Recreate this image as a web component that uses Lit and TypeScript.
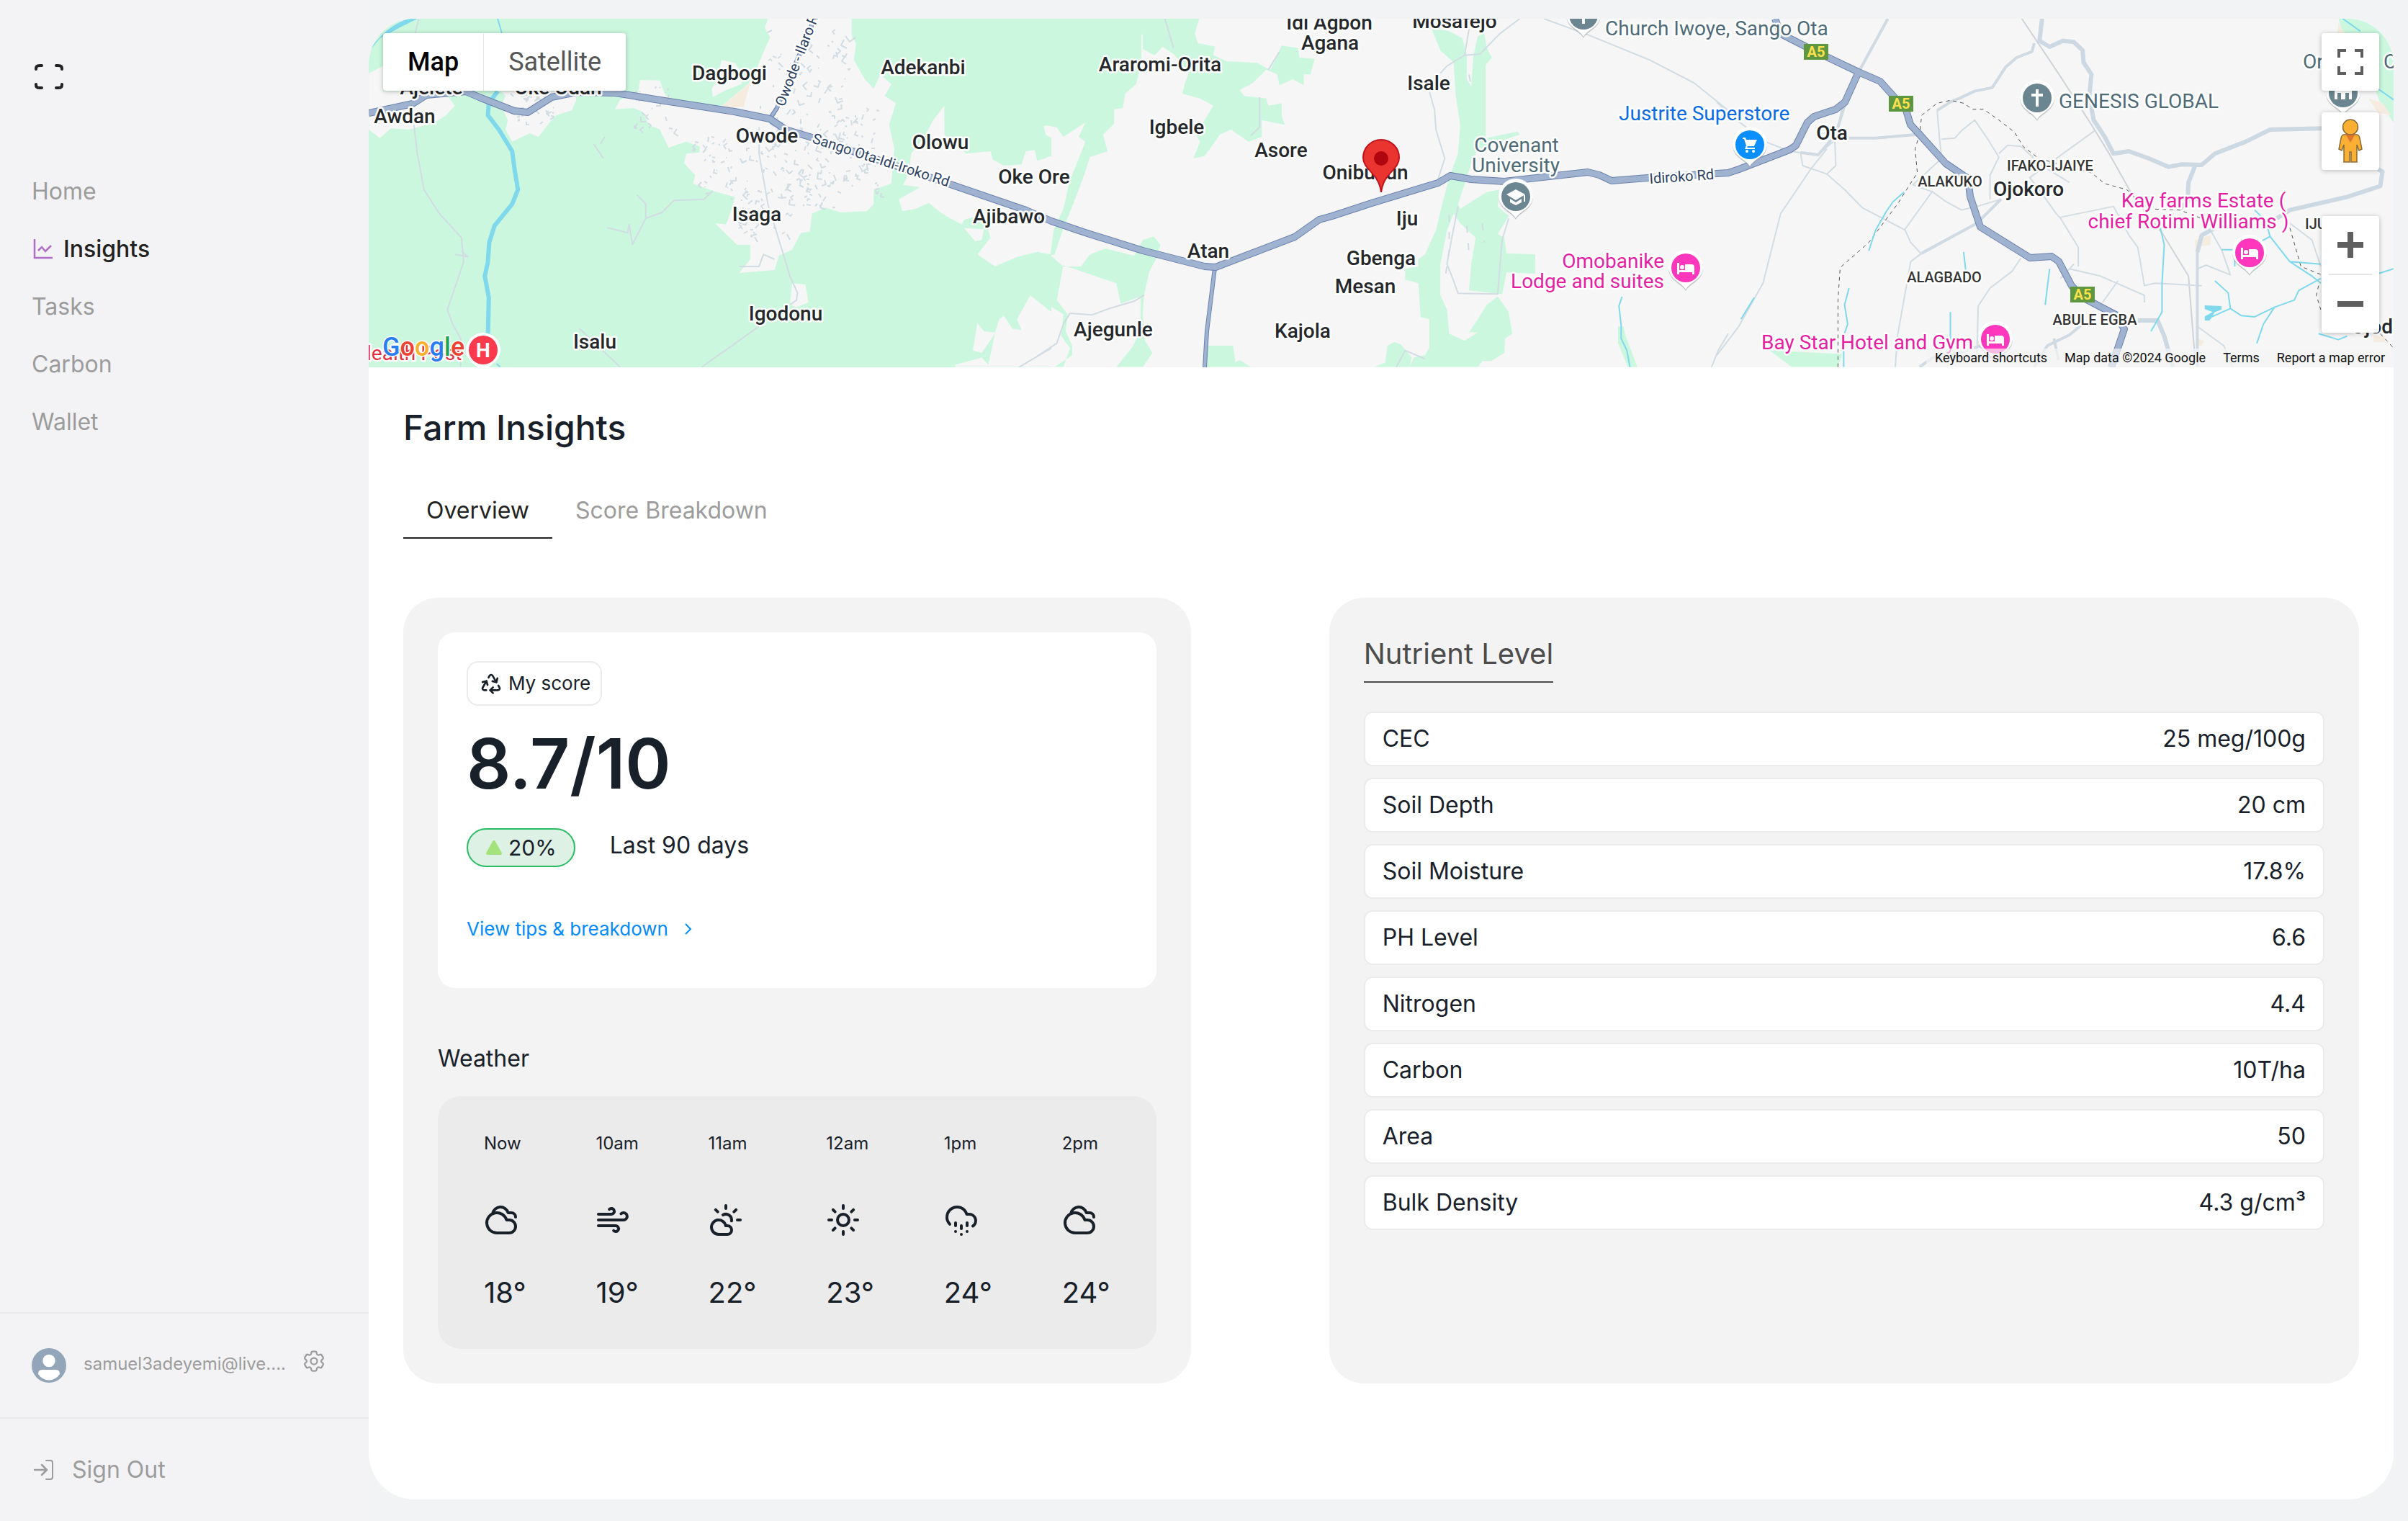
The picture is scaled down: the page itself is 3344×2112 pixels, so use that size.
import { LitElement, html, css, svg } from "lit";
import { customElement, property, state } from "lit/decorators.js";
import { classMap } from "lit/directives/class-map.js";

/* ---------- icons ---------- */

const cloudy = svg`
  <path d="M17.5 21H9a7 7 0 1 1 6.71-9h1.79a4.5 4.5 0 1 1 0 9Z" />
  <path d="M22 10a3 3 0 0 0-3-3h-2.207a5.502 5.502 0 0 0-10.702.5" />`;
const wind = svg`
  <path d="M17.7 7.7a2.5 2.5 0 1 1 1.8 4.3H2" />
  <path d="M9.6 4.6A2 2 0 1 1 11 8H2" />
  <path d="M12.6 19.4A2 2 0 1 0 14 16H2" />`;
const cloudSun = svg`
  <path d="M12 2v2M4.93 4.93l1.41 1.41M20 12h2M19.07 4.93l-1.41 1.41" />
  <path d="M15.947 12.65a4 4 0 0 0-5.925-4.128" />
  <path d="M13 22H7a5 5 0 1 1 4.9-6H13a3 3 0 0 1 0 6Z" />`;
const sun = svg`
  <circle cx="12" cy="12" r="4" />
  <path d="M12 2v2M12 20v2M4.93 4.93l1.41 1.41M17.66 17.66l1.41 1.41M2 12h2M20 12h2M6.34 17.66l-1.41 1.41M19.07 4.93l-1.41 1.41" />`;
const hail = svg`
  <path d="M4 14.899A7 7 0 1 1 15.71 8h1.79a4.5 4.5 0 0 1 2.5 8.242" />
  <path d="M16 14v2M8 14v2M16 20h.01M8 20h.01M12 16v2M12 22h.01" />`;
const recycle = svg`
  <path d="M7 19H4.815a1.83 1.83 0 0 1-1.57-.881 1.785 1.785 0 0 1-.004-1.784L7.196 9.5" />
  <path d="M11 19h8.203a1.83 1.83 0 0 0 1.556-.89 1.784 1.784 0 0 0 0-1.775l-1.226-2.12" />
  <path d="m14 16-3 3 3 3" />
  <path d="M8.293 13.596 7.196 9.5 3.1 10.598" />
  <path d="m9.344 5.811 1.093-1.892A1.83 1.83 0 0 1 11.985 3a1.784 1.784 0 0 1 1.546.888l3.943 6.843" />
  <path d="m13.378 9.633 4.096 1.098 1.097-4.096" />`;

/* ---------- farm map ---------- */

type Anchor = "start" | "middle" | "end";
type Place = [text: string, x: number, y: number];

const towns: Place[] = [
  ["Awdan", 562, 171], ["Ajelete", 599, 131], ["Oke Odan", 775, 131], ["Dagbogi", 1013, 111],
  ["Adekanbi", 1282, 103], ["Owode", 1065, 198], ["Olowu", 1306, 207], ["Isaga", 1051, 307],
  ["Igodonu", 1091, 445], ["Isalu", 826, 484], ["Oke Ore", 1436, 255], ["Ajibawo", 1401, 310],
  ["Araromi-Orita", 1611, 99], ["Idi Agbon", 1846, 41], ["Agana", 1847, 69], ["Mosafejo", 2020, 39],
  ["Isale", 1984, 125], ["Igbele", 1634, 186], ["Asore", 1779, 218], ["Onibukun", 1896, 249],
  ["Iju", 1954, 313], ["Atan", 1678, 358], ["Gbenga", 1918, 368], ["Mesan", 1896, 407],
  ["Ajegunle", 1546, 467], ["Kajola", 1809, 469], ["Ota", 2544, 194], ["Ojokoro", 2817, 272],
  ["Ojod", 3294, 463],
];
const districts: Place[] = [
  ["IFAKO-IJAIYE", 2847, 237], ["ALAKUKO", 2708, 259], ["ALAGBADO", 2700, 392],
  ["ABULE EGBA", 2909, 451], ["IJU", 3216, 318],
];
const pois: [string, number, number, string, Anchor][] = [
  ["Covenant", 2106, 211, "slate", "middle"],
  ["University", 2105, 239, "slate", "middle"],
  ["Church Iwoye, Sango Ota", 2229, 49, "slate", "start"],
  ["GENESIS GLOBAL", 2859, 150, "slate", "start"],
  ["Or", 3198, 95, "slate", "start"],
  ["C", 3310, 95, "slate", "start"],
  ["Justrite Superstore", 2248, 167, "blue", "start"],
  ["Omobanike", 2311, 372, "pink", "end"],
  ["Lodge and suites", 2311, 400, "pink", "end"],
  ["Kay farms Estate (", 3060, 288, "pink", "middle"],
  ["chief Rotimi Williams )", 3039, 317, "pink", "middle"],
  ["Bay Star Hotel and Gym", 2446, 485, "pink", "start"],
  ["lealth Post", 509, 500, "red", "start"],
];
const shields: [number, number][] = [[2522, 72], [2640, 144], [2892, 409]];

const glyphs: Record<string, unknown> = {
  cap: svg`<path d="M-13 -3L0 -10L13 -3L0 5ZM-8 3L0 8L8 3V8L0 12L-8 8ZM11 -2H13V7H11Z" />`,
  cross: svg`<path d="M-2 -12H2V-6H8V-2H2V12H-2V-2H-8V-6H-2Z" />`,
  bed: svg`<path d="M-12 -7H-9V3H-1V-5H8Q12 -5 12 -1V9H9V6H-9V9H-12Z" /><circle cx="-5" cy="-1" r="3" />`,
  cart: svg`<path d="M-10 -10H-6L-5 -7H10L6 2H-3L-4 4H7V6H-7L-5 1L-8 -8H-10Z" /><circle cx="-4" cy="9" r="2" /><circle cx="5" cy="9" r="2" />`,
  hall: svg`<path d="M-12 -6H12V9H8V0H3V9H-3V0H-8V9H-12Z" />`,
};
const pins: [number, number, string, string][] = [
  [2105, 273, "#6b8591", "cap"], [2199, 21, "#6b8591", "cross"], [2829, 136, "#6b8591", "cross"],
  [3254, 129, "#6b8591", "hall"], [2430, 201, "#0b8fff", "cart"], [2341, 372, "#ff37bd", "bed"],
  [3124, 351, "#ff37bd", "bed"], [2771, 471, "#ff37bd", "bed"],
];

/* Short street fragments scattered through the built-up area around Owode. */
function streets(): string {
  let seed = 11;
  const next = () => (seed = (seed * 16807) % 2147483647) / 2147483647;
  const blocks = [
    [1072, 40, 110, 100, 50], [1055, 150, 170, 120, 130], [960, 190, 90, 80, 40],
    [1015, 290, 90, 40, 26], [880, 120, 60, 60, 20], [1010, 250, 160, 40, 40], [710, 130, 60, 40, 30],
  ];
  let d = "";
  for (const [x, y, w, h, n] of blocks) {
    for (let i = 0; i < n; i++) {
      const sx = Math.round(x + next() * w);
      const sy = Math.round(y + next() * h);
      const dx = Math.round(next() * 12 - 6);
      const dy = Math.round(next() * 12 - 4);
      d += `M${sx} ${sy}l${dx} ${dy}`;
      if (next() > 0.6) d += `l${dy} ${-dx}`;
    }
  }
  return d;
}
const streetPath = streets();

@customElement("farm-map")
export class FarmMap extends LitElement {
  @state() private view = "Map";

  static styles = css`
    :host { display: block; position: relative; overflow: hidden; font-family: Roboto, "Noto Sans", sans-serif; }
    .canvas { display: block; width: 100%; height: 484px; background: #f6f6f6; }
    .green { fill: #cbf7de; }
    .land { fill: #f6f6f6; }
    .sand { fill: #f5ecdf; }
    .line { fill: none; vector-effect: non-scaling-stroke; stroke-linejoin: round; }
    .river { stroke: #7fd8ec; stroke-width: 6; }
    .stream { stroke: #7fd8ec; stroke-width: 2; }
    .lake { fill: #7fd8ec; }
    .lane { stroke: #d2dce3; stroke-width: 2; }
    .road { stroke: #cfdae3; stroke-width: 4; }
    .avenue { stroke: #cdd9e2; stroke-width: 6; }
    .border { stroke: #555; stroke-width: 1; stroke-dasharray: 5 5; }
    .rail { stroke: #cfd3d8; stroke-width: 2; }
    .case { stroke: #6b82ae; stroke-width: 10; }
    .highway { stroke: #9fb3d1; stroke-width: 8; }
    .case.slim { stroke-width: 6; }
    .highway.slim { stroke-width: 4; }
    text { paint-order: stroke; stroke: #fff; stroke-width: 5; stroke-linejoin: round; font-size: 28px; }
    .town { fill: #25282b; font-weight: 500; }
    .district { fill: #333; font-size: 20px; font-weight: 500; }
    .street { fill: #2d3f5f; font-size: 20px; }
    .slate { fill: #4f6b77; }
    .blue { fill: #0a6be0; }
    .pink { fill: #e31fa3; }
    .red { fill: #e0313f; }
    .shield { fill: #ffe14d; font-size: 20px; font-weight: 700; stroke: none; }
    .aitch { fill: #fff; font-size: 28px; font-weight: 700; stroke: none; }
    .google { font-size: 36px; font-weight: 500; stroke-width: 3; }

    .types { position: absolute; left: 20px; top: 20px; display: flex; background: #fff; border-radius: 4px; box-shadow: 0 1px 6px rgba(0, 0, 0, 0.25); }
    .types button { border: 0; background: none; font: 400 36px/80px Roboto, sans-serif; color: #565656; padding: 0 34px; }
    .types button.on { color: #000; font-weight: 500; }
    .types button + button { border-left: 1px solid #e3e3e3; }
    .tools { position: absolute; right: 20px; top: 20px; display: flex; flex-direction: column; gap: 30px; }
    .tools .zoom { margin-top: 34px; }
    .tool, .zoom { background: #fff; border: 0; border-radius: 4px; box-shadow: 0 1px 6px rgba(0, 0, 0, 0.25); width: 80px; }
    .tool { height: 80px; padding: 0; display: grid; place-items: center; }
    .zoom { display: flex; flex-direction: column; align-items: center; }
    .zoom .tool { box-shadow: none; background: none; }
    .zoom hr { width: 60px; height: 2px; border: 0; margin: 0; background: #e3e3e3; }
    .legal { position: absolute; right: 0; bottom: 0; display: flex; background: rgba(245, 245, 245, 0.7); font-size: 18px; line-height: 26px; color: #111; }
    .legal > * { padding: 0 12px; color: inherit; text-decoration: none; border: 0; background: none; font: inherit; }
  `;

  private pin([x, y, fill, glyph]: [number, number, string, string]) {
    return svg`<g transform=${`translate(${x} ${y})`}>
      <path d="M0 32C-5 22 -24 18 -24 0A24 24 0 0 1 24 0C24 18 5 22 0 32Z" fill="#8a9499" opacity=".5" />
      <path d="M0 30C-5 20 -24 16 -24 -1A24 24 0 0 1 24 -1C24 16 5 20 0 30Z" fill="#fff" />
      <circle r="20" fill=${fill} /><g fill="#fff">${glyphs[glyph]}</g></g>`;
  }

  private west() {
    return svg`<g transform="translate(500 0) scale(.6123 .3333)">
      <rect class="green" x="0" y="60" width="1568" height="1500" />
      <path class="land" d="M20 305L52 275V380H190L215 440L195 480L170 510L110 540L70 535L45 575L20 540Z" />
      <path class="land" d="M320 380H490V420L480 460L445 480L430 510L405 570L385 555L345 590L330 540L335 500L320 440L330 400Z" />
      <path class="land" d="M820 250L850 262L868 310L865 350L830 375L800 405L798 370L810 330Z" />
      <path class="land" d="M925 78L918 115L930 155L905 260L895 310L880 350L815 450L720 425L692 395L680 335L635 333L630 395L590 415L578 455L620 450L640 465L655 520L680 540L700 615L740 590L770 610V635L740 640L735 680L760 730L755 765L800 795L850 820L845 860L830 935L805 930L830 975L855 1020H885V1080L860 1137L940 1125L950 1065L980 1040L1000 970L1020 965L1025 890L1055 865L1090 885L1150 880L1165 850V790L1205 765L1212 620L1200 520L1215 430L1190 400L1205 350L1180 310L1165 370L1145 330L1120 250L1125 180L1115 150V78Z" />
      <path class="land" d="M1325 440L1300 500L1280 570L1250 640L1245 720L1232 770L1270 780L1222 830L1230 880L1260 870L1290 845L1320 890L1365 935L1370 915L1390 905L1420 930L1430 990L1400 1060L1440 1110L1490 1070L1535 1050L1568 1060V650L1535 665L1530 625L1510 630L1500 685L1460 690L1435 665L1430 630L1375 640L1325 560Z" />
      <path class="land" d="M1568 520L1550 525L1555 560L1568 575ZM1370 950L1415 955L1410 1000L1395 1005Z" />
      <path class="land" d="M980 1180L1010 1185L1017 1260L990 1280L975 1270Z" />
      <path class="land" d="M1520 1230L1568 1300V1529H1350V1520L1410 1490L1425 1520L1440 1390L1410 1470L1390 1460L1400 1345L1415 1380L1440 1385L1450 1330L1460 1315L1480 1370L1500 1375L1490 1330Z" />
      <path class="sand" d="M885 345L815 450L870 445Z" />
      <path class="line lane" d="M133 78L125 140M122 520L130 640L145 790L180 890L230 990L235 1090L215 1200L198 1290L210 1350L228 1410V1529M561 948L607 970L610 935L618 1018L648 910L685 885L712 835L780 830L800 795M648 910V850L628 812M905 530V640L925 850L950 1000L975 1150L992 1220L990 1250L975 1270M905 1360L775 1529M497 1368L550 1460L590 1529M640 1529M1568 1450L1495 1529M530 600L552 660M545 600L555 570M860 1110H905L915 1060L940 1080M215 1060L245 1070L230 1045" />
      <path class="lake" d="M20 215C45 140 80 95 110 78H130L90 115L45 160Z" />
      <path class="line stream" d="M312 78L322 140M310 1515L318 1529" />
      <path class="line river" d="M312 380L292 430L290 480L315 540L345 630L350 700L358 790L345 850L305 940L293 1010L290 1090L283 1150L292 1240L290 1400" />
    </g>
    <path class="line lane" d=${streetPath} />`;
  }

  private center() {
    return svg`<g transform="translate(1440 0) scale(.6123 .3333)">
      <rect class="land" x="33" y="60" width="1535" height="1500" />
      <path class="green" d="M0 78H262V110L237 145V260L225 350L200 390L195 450L175 455V515L150 560L160 630L120 655L105 740L80 860L60 950L40 1060L30 1065L38 960L60 870L75 750L95 660L110 590L95 570L110 510L60 570L45 530L15 520H0Z" />
      <path class="green" d="M0 575L20 605V660L0 670Z" />
      <path class="green" d="M262 78H368L358 140L365 180L420 200L480 240L510 265L530 290L555 190L592 200L595 240L630 245L620 310H605V355L580 330L550 355L545 310L520 290L490 345L460 375L470 400L520 410L525 440L555 430V480L562 520L540 512L510 500V570L480 590L440 540L415 560L400 600L380 650L355 660L370 590L360 560L400 440L370 410L330 390L335 350L345 300L310 225L285 195L267 230L240 205V140Z" />
      <path class="land" d="M405 175L500 190L545 200L528 290L500 262L430 255L400 230Z" />
      <path class="green" d="M0 1050L30 1062L60 1110H100L120 1060L155 1035L220 1065L240 1000L265 985L280 1020L270 1080L255 1130L243 1230L240 1310L245 1420L262 1470L240 1529H180L215 1450L235 1380V1235L190 1265L180 1180L60 1105L50 1200L45 1250L70 1310L65 1380L80 1440V1480L40 1529H60L75 1450L55 1400L60 1310L0 1240Z" />
      <path class="green" d="M385 1440H445L450 1510L460 1500L485 1529H385Z" />
      <path class="green" d="M895 120L925 125L935 130L965 160L975 230V330L985 360L990 230L1000 150L1015 140L1020 200L1032 240L1018 270V575L1090 548L1095 560L1000 620L985 680L975 740L955 850L960 870L1020 800L1050 790L1045 860L1070 900L1045 975L1060 990L1065 1055L1130 1060V1140L1065 1135L1055 1225L980 1210L985 1100L995 990L960 930L945 890L930 960L915 1100L915 1230L930 1290L935 1390L970 1420L1000 1385H980L1000 1330L1020 1270L1045 1235L1070 1300L1078 1390L1062 1410L1060 1470L1030 1505H1010L1000 1529H845L855 1490L880 1480L890 1450V1330L870 1320L865 1180L835 1165V1120L865 1110V1080L880 1060L905 960L915 880L935 740L955 640L960 520L950 400L945 260L915 210Z" />
      <path class="green" d="M765 1529L790 1510L795 1440L810 1425L825 1435L850 1490L845 1529Z" />
      <path class="green" d="M1318 1360H1330L1335 1400L1362 1529H1340L1318 1430Z" />
      <path class="line lane" d="M290 78L310 200M550 215L525 290M505 405V530L485 565M1095 78L1050 140L1005 225L970 230L930 275L915 305M980 120L970 230M890 380L902 460L905 540L925 660L910 745M1150 78L1250 145L1390 250L1490 345L1568 460M0 1485L45 1430L60 1350L75 1305L125 1312L165 1285L220 1255L243 1230M955 860L940 1000L930 1100L945 1170L955 1222L1045 1225L1055 1000L1070 910M1568 1390L1545 1460L1530 1529M815 1529L835 1460L880 1495" />
      <path class="line lane" stroke-dasharray="10 14" d="M935 895V1040L925 1170M975 940L980 1060M1010 930L1015 1010M980 310L985 360" />
      <path class="line stream" d="M1327 1236L1320 1275L1325 1355V1410L1338 1460L1345 1529" />
    </g>`;
  }

  private east() {
    return svg`<g transform="translate(2384 0) scale(.6123 .3333)">
      <path class="green" d="M120 1460L285 1475L275 1529H170ZM1410 78H1535V510L1505 430L1495 380L1475 200L1420 140Z" />
      <path class="sand" d="M1410 95L1425 140H1408ZM1478 410L1510 430L1530 480L1500 470ZM1085 1000L1120 980V1020L1085 1030ZM1090 1410L1105 1420L1100 1440H1085ZM1490 1400H1515V1425H1490Z" />
      <path class="line rail" d="M692 78L780 320L850 520L890 640L945 820L1010 970L1070 1150L1085 1500" />
      <path class="line lane" d="M0 425L45 500L110 590L165 630M190 635L195 690L250 725L290 790L330 865L427 958L440 1010L465 1060M165 630L230 645L270 580L285 440M250 725L270 690L268 590M250 620L215 700L145 890L105 1180L50 1360L0 1480M500 460L505 570L510 660L445 770L490 800L520 840L555 875L590 860L645 830M510 580L540 575L555 545L585 500L615 580L635 640L640 655L620 730V830M640 640L660 605L690 610L720 660M857 545L710 740L735 800L770 890L780 910L820 1030V1110M720 670L800 760M780 905L900 860L935 980L955 1030L970 1190L995 1180L1100 1190M800 1120L870 1150L970 1230V1260M810 1100L780 1160M910 1170L875 1260M1090 1120L1110 1105L1165 1145L1145 1040L1120 960M690 1075L670 1130L620 1200L593 1275L590 1480M465 1055L440 1090L410 1400L405 1529M490 795L425 960M1090 1360L1150 1440L1170 1529M1300 930L1350 1000L1370 1110M0 425" />
      <path class="line road" d="M388 78L322 300M300 575H360L455 560M720 180L715 215L680 240L655 280L625 365L585 380L550 410L530 425L500 460M290 440L270 560L230 645L190 635M465 1055L590 930L645 830M1090 1050V1529" />
      <path class="line road" d="M460 1529L490 1490L550 1470L600 1440L640 1400M720 1529L750 1440L800 1395L830 1350M520 1490H640M765 1410L775 1500" />
      <path class="line avenue" d="M738 78L732 170L755 195L785 170L810 175L830 210L832 260L850 310L845 400L855 500L880 570L900 640L935 630L980 660L1025 695L1055 685L1100 687L1130 640L1200 590L1255 540L1375 535M1085 690L1070 760L1068 840L1050 870M1500 705L1510 715L1505 775L1430 820L1300 875L1270 910M1090 1050L1100 980L1130 950M955 1335H1000L1015 1400L1035 1529" />
      <path class="line border" d="M275 1529V1250L280 1115L345 1010L410 850L455 720L450 620L460 560L465 480L500 430L530 418L560 430L580 455H605L640 500L675 550L695 610L730 660L850 720L880 765L930 790L960 840L980 870L1050 875L1100 910M1300 950L1325 1110L1372 1145M1365 1190L1360 1230L1370 1290M1505 1390L1535 1450" />
      <path class="line stream" d="M345 1045L360 960L385 880L400 840L425 800M300 1200L290 1270L297 1350L288 1400V1529M560 1050L565 1130M755 1120L745 1270M55 1330L85 1240M530 1300V1480M1005 940L1015 1020L1010 1180V1300L985 1380M1220 875L1245 920L1255 985L1300 1090L1350 1150L1370 1180M1255 985L1220 1020M1370 1160L1320 1210L1310 1250L1265 1280L1220 1320L1190 1315L1165 1285M1265 1280L1240 1350L1225 1430M1130 1170L1160 1220L1165 1285L1110 1330M1300 1090L1370 1100M1365 1390L1410 1415L1430 1400M1500 1140L1535 1120M1420 78L1460 130M1500 370L1535 415M1175 1110V1040H1145" />
      <path class="lake" d="M1107 1272L1145 1275V1290L1130 1300L1118 1335H1107V1318L1125 1300L1107 1288Z" />
    </g>`;
  }

  private highways() {
    const main =
      "M512 157L573 144L592 132L647 127L668 136L714 154L733 156L766 135L800 128L855 129L910 138L1020 155L1069 165L1091 180L1131 192L1317 255L1425 292L1460 307L1507 323L1587 348L1673 370L1688 371L1798 329L1832 305L1850 300L1905 282L1997 254L2014 244L2043 249L2089 252L2205 239L2221 243L2238 251L2288 247L2400 240L2415 235L2485 208L2494 202L2510 170L2519 162L2549 152L2562 142L2581 100";
    const a5 =
      "M2465 26L2473 47L2522 72L2581 100L2611 113L2629 133L2647 153L2653 173L2666 187L2702 227L2733 248L2736 273L2750 315L2819 358L2849 356L2859 363L2877 397L2892 413L2938 437L2950 457L2932 510";
    const spurs = "M1069 165L1079 150L1131 26M1687 372L1676 460L1673 510";
    return svg`
      <path class="line case slim" d=${spurs} /><path class="line highway slim" d=${spurs} />
      <path class="line case" d=${main} /><path class="line case" d=${a5} />
      <path class="line highway" d=${main} /><path class="line highway" d=${a5} />`;
  }

  render() {
    return html`
      <svg class="canvas" viewBox="512 26 2812 484" preserveAspectRatio="xMidYMid slice" role="img" aria-label="Map of the farm area">
        ${this.west()}${this.center()}${this.east()}${this.highways()}
        ${shields.map(([x, y]) => svg`<rect x=${x - 17} y=${y - 11} width="34" height="22" fill="#5f9640" />
          <text class="shield" x=${x} y=${y + 7} text-anchor="middle">A5</text>`)}
        <text class="street" transform="translate(1089 149) rotate(-69)">Owode - Ilaro Rd</text>
        <text class="street" transform="translate(1127 198) rotate(18)">Sango Ota-Idi-Iroko Rd</text>
        <text class="street" transform="translate(2291 255) rotate(-4)">Idiroko Rd</text>
        ${districts.map(([t, x, y]) => svg`<text class="district" x=${x} y=${y} text-anchor="middle">${t}</text>`)}
        ${towns.map(([t, x, y]) => svg`<text class="town" x=${x} y=${y} text-anchor="middle">${t}</text>`)}
        ${pois.map(([t, x, y, c, a]) => svg`<text class=${c} x=${x} y=${y} text-anchor=${a}>${t}</text>`)}
        ${pins.map((p) => this.pin(p))}
        <g transform="translate(671 486)">
          <path d="M0 32C-5 22 -24 18 -24 0A24 24 0 0 1 24 0C24 18 5 22 0 32Z" fill="#fff" />
          <circle r="20" fill="#fb3a4e" /><text class="aitch" y="10" text-anchor="middle">H</text>
        </g>
        <path d="M1918 267C1915 240 1893 236 1893 219A25 25 0 0 1 1943 219C1943 236 1921 240 1918 267Z" fill="#ea3430" stroke="#c0141c" stroke-width="2" />
        <circle cx="1918" cy="220" r="10" fill="#b0060f" />
        <text class="google" x="531" y="494"><tspan fill="#2a7df0">G</tspan><tspan fill="#ea4335">o</tspan><tspan fill="#fbb02d">o</tspan><tspan fill="#2a7df0">g</tspan><tspan fill="#27a350">l</tspan><tspan fill="#ea4335">e</tspan></text>
      </svg>
      <div class="types">
        ${["Map", "Satellite"].map((t) => html`<button type="button" class=${classMap({ on: this.view === t })} @click=${() => (this.view = t)}>${t}</button>`)}
      </div>
      <div class="tools">
        <button class="tool" type="button" aria-label="Toggle fullscreen view">
          <svg width="36" height="36" viewBox="0 0 36 36" fill="none" stroke="#5f5f5f" stroke-width="4"><path d="M2 12V2H12M24 2H34V12M34 24V34H24M12 34H2V24" /></svg>
        </button>
        <button class="tool" type="button" aria-label="Street View">
          <svg width="36" height="62" viewBox="0 0 36 62" stroke="#8a6a35" stroke-width="1.5">
            <path d="M9 22H27Q30 22 31 27L34 42L30 44L27 36V60H19V46H17V60H9V36L6 44L2 42L5 27Q6 22 9 22Z" fill="#fbb033" />
            <path d="M11 21H25L18 33Z" fill="#e0752f" stroke="none" />
            <circle cx="18" cy="11.500" r="10.500" fill="#fbb033" />
          </svg>
        </button>
        <div class="zoom">
          <button class="tool" type="button" aria-label="Zoom in">
            <svg width="36" height="36" viewBox="0 0 36 36" fill="#5f5f5f"><path d="M14 0H22V14H36V22H22V36H14V22H0V14H14Z" /></svg>
          </button>
          <hr />
          <button class="tool" type="button" aria-label="Zoom out">
            <svg width="36" height="36" viewBox="0 0 36 36" fill="#5f5f5f"><path d="M0 14H36V22H0Z" /></svg>
          </button>
        </div>
      </div>
      <div class="legal">
        <button type="button">Keyboard shortcuts</button><span>Map data ©2024 Google</span>
        <a href="#terms">Terms</a><a href="#report">Report a map error</a>
      </div>`;
  }
}

/* ---------- sidebar ---------- */

@customElement("side-bar")
export class SideBar extends LitElement {
  @property() current = "Insights";

  static styles = css`
    :host { display: flex; flex-direction: column; background: #f3f3f5; color: #9c9c9c; padding-top: 86px; }
    a, button { color: inherit; text-decoration: none; font: inherit; background: none; border: 0; padding: 0; }
    .logo { margin: 0 0 120px 48px; display: block; width: 40px; height: 40px; }
    nav { display: flex; flex-direction: column; gap: 40px; padding-left: 44px; }
    .item { display: flex; align-items: center; gap: 14px; font-size: 32px; line-height: 40px; }
    .item.on { color: #222; font-weight: 500; }
    .item svg { margin-left: 2px; }
    .profile { margin-top: auto; display: flex; align-items: flex-start; gap: 24px; padding: 48px 58px 48px 44px; border-top: 2px solid #ebebed; border-bottom: 2px solid #ebebed; line-height: 44px; font-size: 24px; }
    .mail { flex: 1; min-width: 0; white-space: nowrap; }
    .profile svg { display: block; flex: none; }
    .out { display: flex; align-items: center; gap: 24px; padding: 50px 44px; font-size: 32px; line-height: 42px; }
  `;

  render() {
    return html`
      <a class="logo" href="#home" aria-label="Home">
        <svg width="40" height="40" viewBox="0 0 40 40" fill="none" stroke="#222" stroke-width="4" stroke-linecap="round"><path d="M2 10V9Q2 5 7 5H10M30 5H33Q38 5 38 9V10M38 31V32Q38 36 33 36H30M10 36H7Q2 36 2 32V31" /></svg>
      </a>
      <nav>
        ${["Home", "Insights", "Tasks", "Carbon", "Wallet"].map(
          (t) => html`<a class=${classMap({ item: true, on: t === this.current })} href="#${t.toLowerCase()}">
            ${t === this.current
              ? html`<svg width="28" height="28" viewBox="0 0 28 28" fill="none" stroke="#b06cc9" stroke-width="2.500"><path d="M2 0V26H27M7 16L12 11L17 17L25 9" /></svg>`
              : ""}${t}</a>`
        )}
      </nav>
      <div class="profile">
        <svg width="48" height="48" viewBox="0 0 48 48"><circle cx="24" cy="24" r="24" fill="#93a5b8" /><circle cx="24" cy="17.500" r="8.700" fill="#fff" /><path d="M14 30H34Q39 30 39 36Q33 44.500 24 44.500Q15 44.500 9 36Q9 30 14 30Z" fill="#fff" /></svg>
        <span class="mail">samuel3adeyemi@live....</span>
        <button type="button" aria-label="Settings">
          <svg width="36" height="36" viewBox="0 0 24 24" fill="none" stroke="#9c9c9c" stroke-width="1.500" stroke-linejoin="round"><path d="M9.594 3.94c.09-.542.56-.94 1.11-.94h2.593c.55 0 1.02.398 1.11.94l.213 1.281c.063.374.313.686.645.87.074.04.147.083.22.127.325.196.72.257 1.075.124l1.217-.456a1.125 1.125 0 0 1 1.37.49l1.296 2.247a1.125 1.125 0 0 1-.26 1.431l-1.003.827c-.293.241-.438.613-.43.992a7.723 7.723 0 0 1 0 .255c-.008.378.137.75.43.991l1.004.827c.424.35.534.955.26 1.43l-1.298 2.247a1.125 1.125 0 0 1-1.369.491l-1.217-.456c-.355-.133-.75-.072-1.076.124a6.47 6.47 0 0 1-.22.128c-.331.183-.581.495-.644.869l-.213 1.281c-.09.543-.56.94-1.11.94h-2.594c-.55 0-1.019-.398-1.11-.94l-.213-1.281c-.062-.374-.312-.686-.644-.87a6.52 6.52 0 0 1-.22-.127c-.325-.196-.72-.257-1.076-.124l-1.217.456a1.125 1.125 0 0 1-1.369-.49l-1.297-2.247a1.125 1.125 0 0 1 .26-1.431l1.004-.827c.292-.24.437-.613.43-.991a6.932 6.932 0 0 1 0-.255c.007-.38-.138-.751-.43-.992l-1.004-.827a1.125 1.125 0 0 1-.26-1.43l1.297-2.247a1.125 1.125 0 0 1 1.37-.491l1.216.456c.356.133.751.072 1.076-.124.072-.044.146-.086.22-.128.332-.183.582-.495.644-.869l.214-1.28Z" /><path d="M15 12a3 3 0 1 1-6 0 3 3 0 0 1 6 0Z" /></svg>
        </button>
      </div>
      <button class="out" type="button">
        <svg width="32" height="32" viewBox="0 0 32 32" fill="none" stroke="#9c9c9c" stroke-width="2" stroke-linecap="round" stroke-linejoin="round"><path d="M20 3H26Q29 3 29 6V26Q29 29 26 29H20" /><path d="M4 16H20M14 9L21 16L14 23" stroke-width="2.500" /></svg>
        Sign Out
      </button>`;
  }
}

/* ---------- page ---------- */

const hours: [string, unknown, string][] = [
  ["Now", cloudy, "18°"], ["10am", wind, "19°"], ["11am", cloudSun, "22°"],
  ["12am", sun, "23°"], ["1pm", hail, "24°"], ["2pm", cloudy, "24°"],
];
const nutrients: [string, string][] = [
  ["CEC", "25 meg/100g"], ["Soil Depth", "20 cm"], ["Soil Moisture", "17.8%"], ["PH Level", "6.6"],
  ["Nitrogen", "4.4"], ["Carbon", "10T/ha"], ["Area", "50"], ["Bulk Density", "4.3 g/cm³"],
];

@customElement("app-root")
export class AppRoot extends LitElement {
  @state() private tab = "Overview";

  static styles = css`
    :host { display: grid; grid-template-columns: 512px minmax(0, 1fr); min-height: 100vh; background: #f1f3f5; font-family: Inter, "Noto Sans", sans-serif; color: #18202a; }
    button { font: inherit; color: inherit; background: none; border: 0; padding: 0; }
    h1, h2, h3, p, dl, dd { margin: 0; font-weight: 400; }
    main { margin: 26px 20px 30px 0; background: #fff; border-radius: 64px; overflow: hidden; }
    .content { padding: 48px; }
    h1 { font-size: 48px; line-height: 72px; font-weight: 500; }
    .tabs { display: flex; margin: 42px 0 82px; }
    .tabs button { padding: 17px 32px; font-size: 32px; line-height: 40px; color: #9c9c9c; border-bottom: 2px solid transparent; }
    .tabs button.on { color: #222; border-color: #222; }
    .cards { display: grid; grid-template-columns: 13fr 17fr; gap: 192px; }
    .card { background: #f3f3f3; border-radius: 48px; padding: 48px; }
    .score { background: #fff; border-radius: 24px; padding: 40px 40px 62px; display: flex; flex-direction: column; align-items: flex-start; }
    .chip { display: flex; align-items: center; gap: 8px; border: 2px solid #ebebeb; border-radius: 16px; padding: 0 14px 0 16px; font-size: 26px; line-height: 58px; }
    .value { font-size: 96px; line-height: 96px; font-weight: 600; margin: 32px 0 42px; }
    .trend { display: flex; align-items: flex-start; gap: 48px; font-size: 32px; line-height: 48px; }
    .pill { display: flex; align-items: center; gap: 8px; border: 2px solid #27bb62; border-radius: 27px; background: #ddf1e5; padding: 0 24px; font-size: 30px; line-height: 50px; }
    .tips { margin-top: 66px; color: #058bf5; text-decoration: none; font-size: 26px; line-height: 40px; display: flex; align-items: center; gap: 22px; }
    h3 { font-size: 32px; line-height: 40px; margin: 78px 0 32px; }
    .weather { background: #ebebeb; border-radius: 32px; padding: 50px 64px 54px; display: flex; justify-content: space-between; }
    .hour { display: flex; flex-direction: column; align-items: flex-start; }
    .hour span { font-size: 24px; line-height: 32px; }
    .hour svg { margin: 66px 0 53px; display: block; }
    .hour strong { font-size: 40px; line-height: 48px; font-weight: 400; }
    h2 { display: inline-block; font-size: 40px; line-height: 60px; padding-bottom: 8px; border-bottom: 2px solid #4c4c4c; color: #4c4c4c; }
    dl { display: flex; flex-direction: column; gap: 16px; margin-top: 40px; }
    .row { display: flex; justify-content: space-between; background: #fff; border: 2px solid #ebebeb; border-radius: 12px; padding: 16px 24px; font-size: 32px; line-height: 40px; }
  `;

  render() {
    return html`
      <side-bar current="Insights"></side-bar>
      <main>
        <farm-map></farm-map>
        <div class="content">
          <h1>Farm Insights</h1>
          <div class="tabs" role="tablist">
            ${["Overview", "Score Breakdown"].map(
              (t) => html`<button role="tab" aria-selected=${this.tab === t} class=${classMap({ on: this.tab === t })} @click=${() => (this.tab = t)}>${t}</button>`
            )}
          </div>
          <div class="cards">
            <section class="card">
              <div class="score">
                <div class="chip">
                  <svg width="32" height="32" viewBox="0 0 24 24" fill="none" stroke="#18202a" stroke-width="2" stroke-linecap="round" stroke-linejoin="round">${recycle}</svg>
                  My score
                </div>
                <p class="value">8.7/10</p>
                <div class="trend">
                  <span class="pill"><svg width="24" height="22" viewBox="0 0 24 22"><path d="M12 3L21 19H3Z" fill="#a4e27c" stroke="#a4e27c" stroke-width="4" stroke-linejoin="round" /></svg>20%</span>
                  <span>Last 90 days</span>
                </div>
                <a class="tips" href="#score-breakdown">View tips &amp; breakdown
                  <svg width="12" height="18" viewBox="0 0 12 18" fill="none" stroke="#058bf5" stroke-width="2"><path d="M2 2L9 9L2 16" /></svg></a>
              </div>
              <h3>Weather</h3>
              <div class="weather">
                ${hours.map(
                  ([t, icon, deg]) => html`<div class="hour">
                    <span>${t}</span>
                    <svg width="48" height="48" viewBox="0 0 24 24" fill="none" stroke="#18202a" stroke-width="2" stroke-linecap="round" stroke-linejoin="round">${icon}</svg>
                    <strong>${deg}</strong>
                  </div>`
                )}
              </div>
            </section>
            <section class="card">
              <h2>Nutrient Level</h2>
              <dl>
                ${nutrients.map(([k, v]) => html`<div class="row"><dt>${k}</dt><dd>${v}</dd></div>`)}
              </dl>
            </section>
          </div>
        </div>
      </main>`;
  }
}
